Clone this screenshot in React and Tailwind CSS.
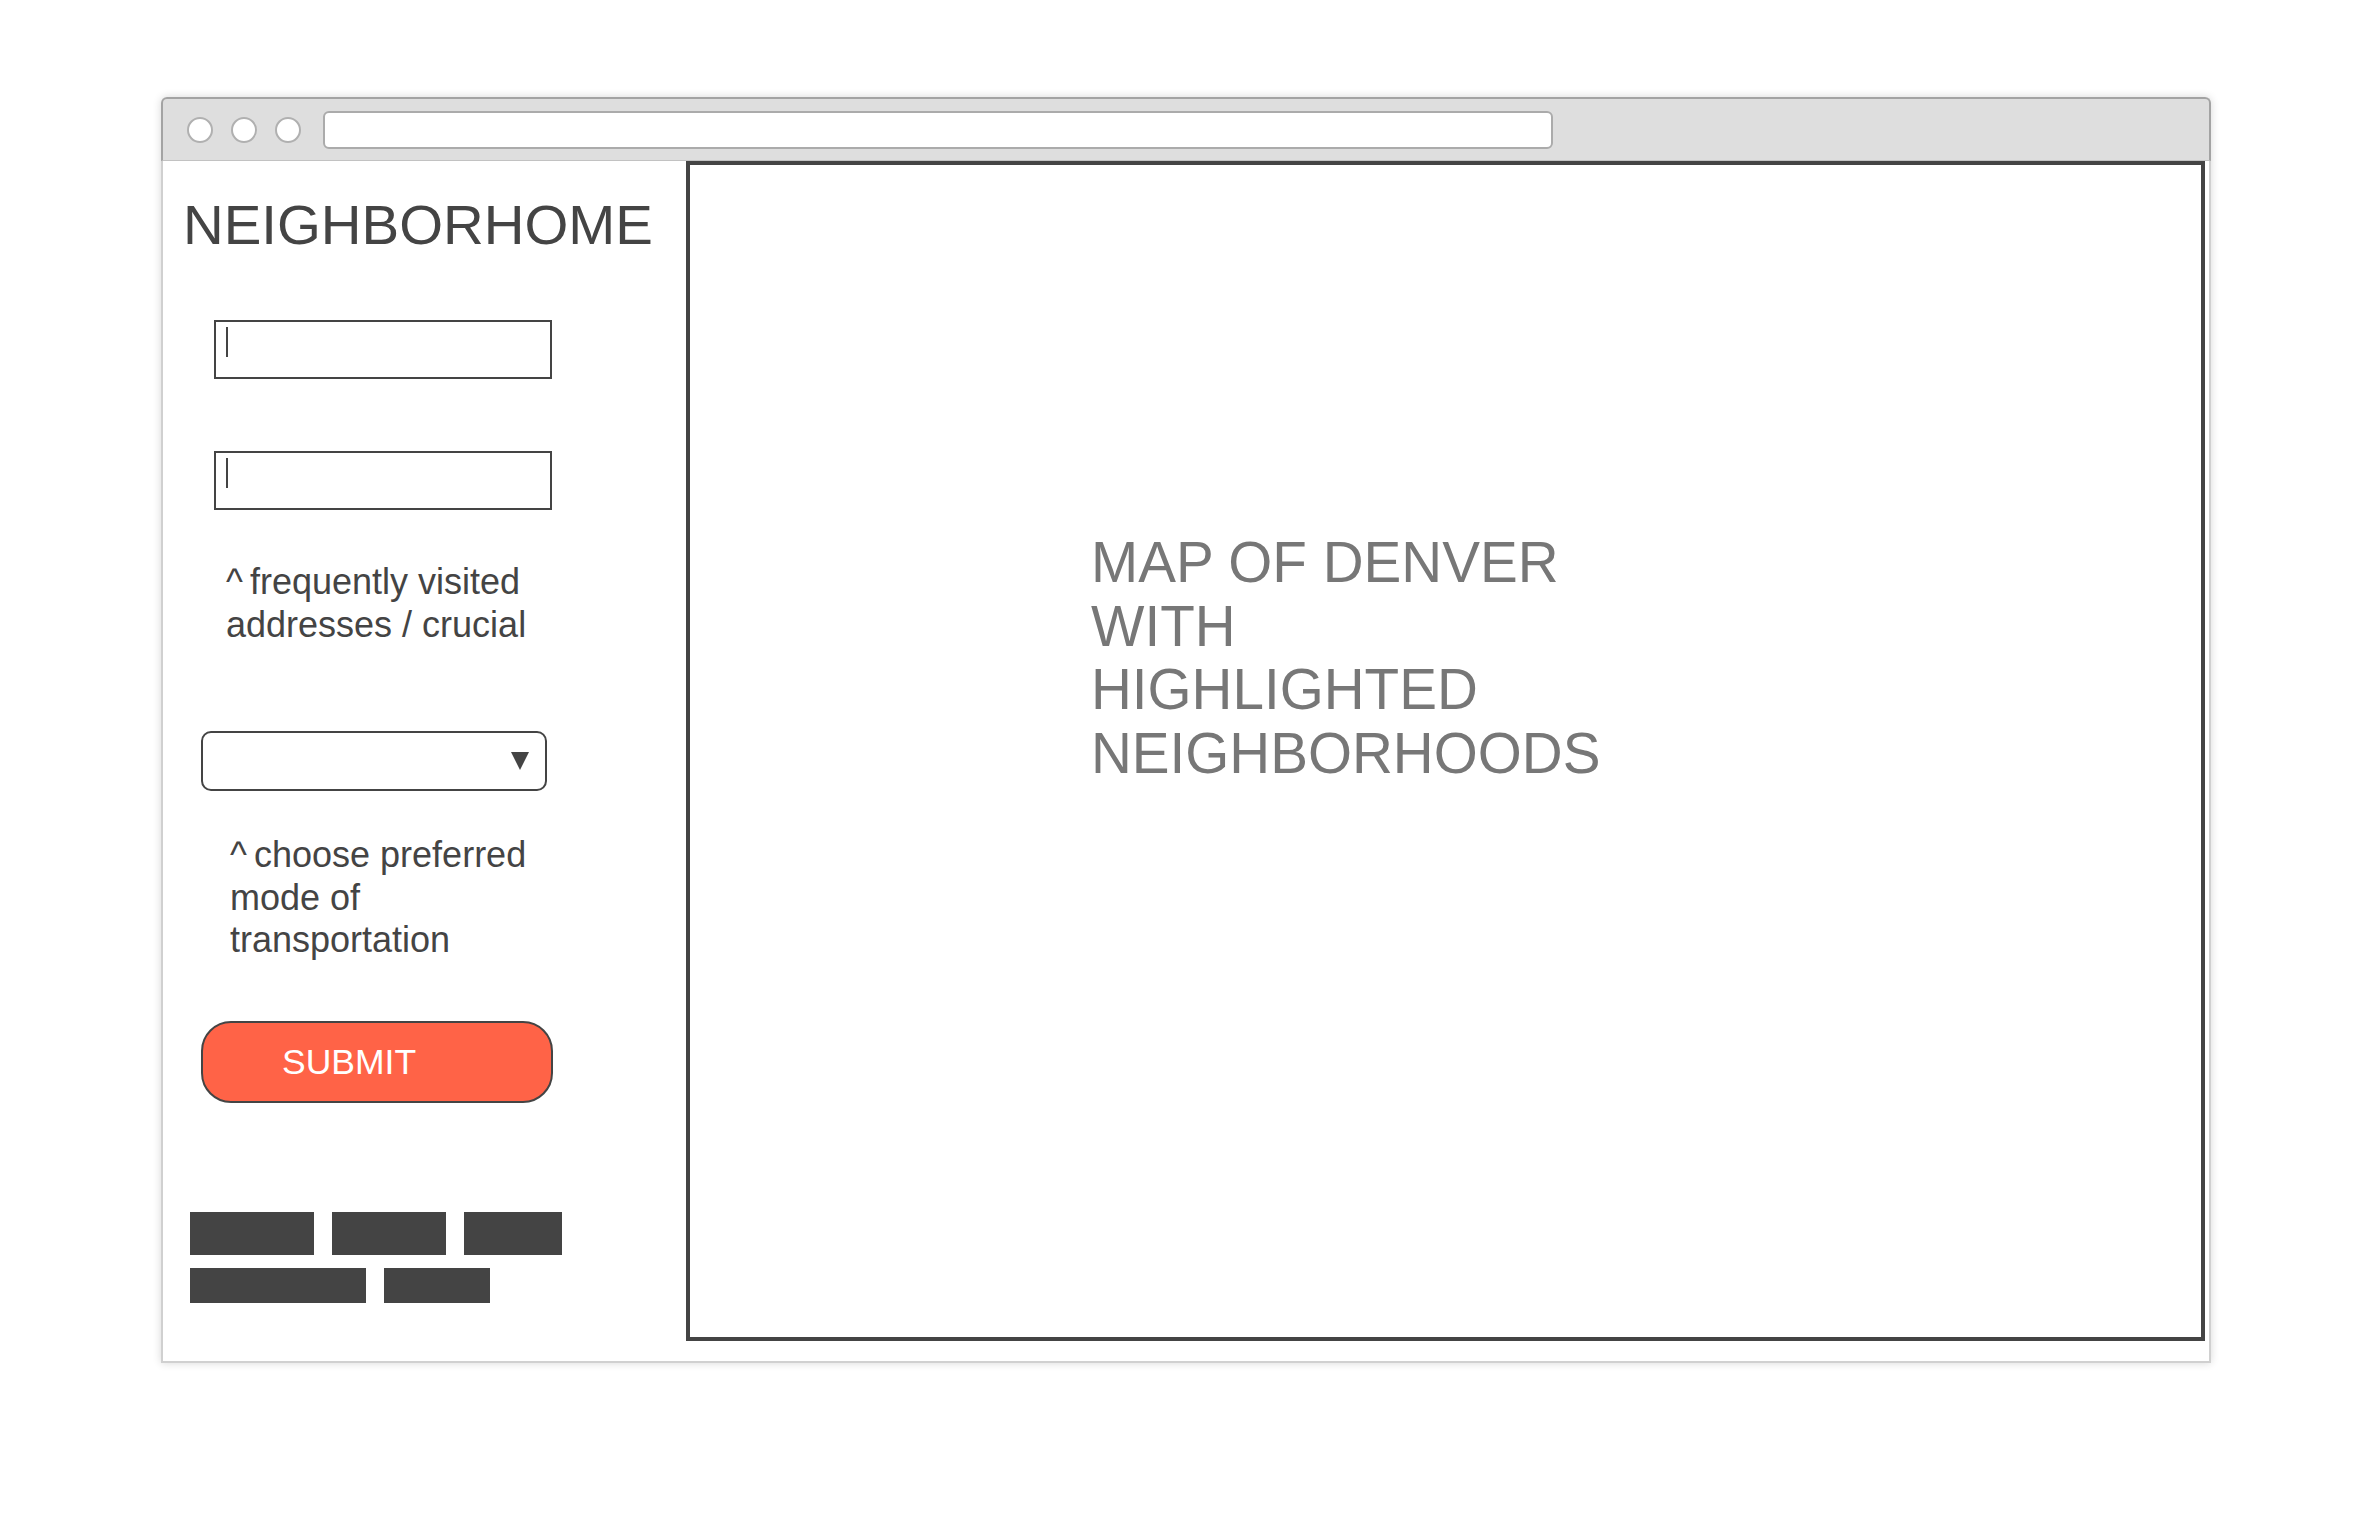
export default function App() {
    return (
        <div className="min-h-screen w-full bg-white pt-[97px] pl-[161px] font-['Liberation_Sans',Arial,sans-serif]">
            <div className="w-[2050px] rounded-t-[6px] shadow-[0_0_9px_rgba(0,0,0,0.16)]">
                {/* title bar */}
                <div className="h-[64px] flex items-center pl-[24px] bg-[#dedede] border-2 border-b border-[#a3a3a3] border-b-[#c2c2c2] rounded-t-[6px]">
                    <div className="flex gap-[18px]">
                        <span className="w-[26px] h-[26px] rounded-full bg-white border-2 border-[#b0b0b0]"></span>
                        <span className="w-[26px] h-[26px] rounded-full bg-white border-2 border-[#b0b0b0]"></span>
                        <span className="w-[26px] h-[26px] rounded-full bg-white border-2 border-[#b0b0b0]"></span>
                    </div>
                    <div className="ml-[22px] w-[1230px] h-[38px] rounded-[6px] border-2 border-[#ababab] bg-white"></div>
                </div>

                {/* page body */}
                <div className="flex h-[1202px] bg-white border-2 border-t-0 border-[#d0d0d0]">
                    <div className="w-[523px] shrink-0 flex flex-col">
                        <h1 className="mt-[32px] ml-[20px] text-[56.4px] leading-[64px] text-[#444]">NEIGHBORHOME</h1>

                        <div className="relative mt-[63px] ml-[51px] w-[338px] h-[59px] border-2 border-[#444]">
                            <span className="absolute left-[10px] top-[5px] w-[2px] h-[30px] bg-[#444]"></span>
                        </div>
                        <div className="relative mt-[72px] ml-[51px] w-[338px] h-[59px] border-2 border-[#444]">
                            <span className="absolute left-[10px] top-[5px] w-[2px] h-[30px] bg-[#444]"></span>
                        </div>

                        <p className="mt-[50px] ml-[63px] w-[320px] text-[36px] leading-[43px] text-[#444]">
                            <span className="inline-block w-[24px]">^</span>frequently visited
                            <br />
                            addresses / crucial
                        </p>

                        <div className="mt-[85px] ml-[38px] w-[346px] h-[60px] rounded-[10px] border-2 border-[#444] flex items-center justify-end pr-[16px]">
                            <svg width="18" height="18" viewBox="0 0 18 18">
                                <polygon points="0,0 18,0 9,18" fill="#444" />
                            </svg>
                        </div>

                        <p className="mt-[43px] ml-[67px] w-[320px] text-[36px] leading-[42.5px] text-[#444]">
                            <span className="inline-block w-[24px]">^</span>choose preferred
                            <br />
                            mode of
                            <br />
                            transportation
                        </p>

                        <button className="mt-[59px] ml-[38px] w-[352px] h-[82px] rounded-[30px] bg-[#ff6347] border-2 border-[#444] text-white text-[35.5px] flex items-center pl-[79px] pt-[2px]">
                            SUBMIT
                        </button>

                        <div className="mt-[109px] ml-[27px] flex flex-col gap-[13px]">
                            <div className="flex gap-[18px]">
                                <span className="w-[124px] h-[43px] bg-[#444]"></span>
                                <span className="w-[114px] h-[43px] bg-[#444]"></span>
                                <span className="w-[98px] h-[43px] bg-[#444]"></span>
                            </div>
                            <div className="flex gap-[18px]">
                                <span className="w-[176px] h-[35px] bg-[#444]"></span>
                                <span className="w-[106px] h-[35px] bg-[#444]"></span>
                            </div>
                        </div>
                    </div>

                    <div className="w-[1519px] h-[1180px] shrink-0 border-4 border-[#444] pl-[401px] pt-[366px]">
                        <p className="w-[530px] text-[56.6px] leading-[63.5px] text-[#777]">
                            MAP OF DENVER WITH HIGHLIGHTED NEIGHBORHOODS
                        </p>
                    </div>
                </div>
            </div>
        </div>
    );
}
